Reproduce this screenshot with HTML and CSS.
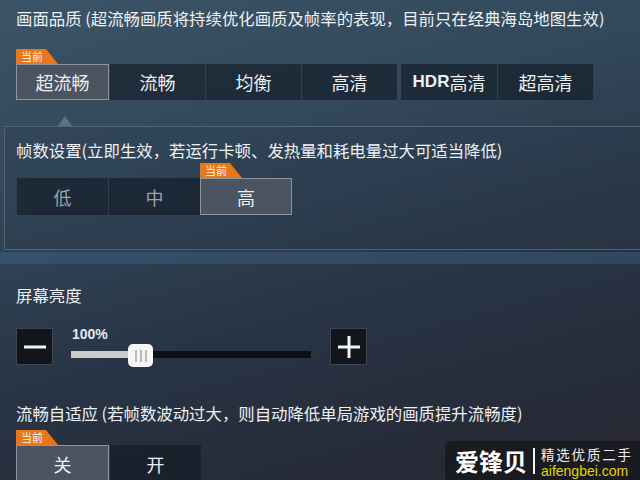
FILE: index.html
```html
<!DOCTYPE html>
<html lang="zh-CN">
<head>
  <meta charset="UTF-8">
  <title>画面设置</title>
  <link rel="stylesheet" href="styles.css">
</head>
<body>
  <div class="page">
    <!-- 画面品质 -->
    <h2 class="title">画面品质 (超流畅画质将持续优化画质及帧率的表现，目前只在经典海岛地图生效)</h2>
    <div class="options quality">
      <div class="opt current first"><span class="badge">当前</span>超流畅</div>
      <div class="opt">流畅</div>
      <div class="opt">均衡</div>
      <div class="opt">高清</div>
      <div class="opt hdr"><b>HDR</b>高清</div>
      <div class="opt">超高清</div>
    </div>

    <!-- 帧数设置 -->
    <div class="panel">
      <span class="pointer"></span>
      <h2 class="title">帧数设置(立即生效，若运行卡顿、发热量和耗电量过大可适当降低)</h2>
      <div class="options fps">
        <div class="opt dim">低</div>
        <div class="opt dim">中</div>
        <div class="opt current"><span class="badge">当前</span>高</div>
      </div>
    </div>
    <div class="band"></div>

    <!-- 屏幕亮度 -->
    <h2 class="title brightness-title">屏幕亮度</h2>
    <div class="slider-row">
      <button class="step">
        <svg width="24" height="24" viewBox="0 0 24 24"><rect x="1" y="10.5" width="22" height="3" fill="#f2f2f2"/></svg>
      </button>
      <div class="slider">
        <div class="value">100%</div>
        <div class="track">
          <div class="fill" style="width: 27%"></div>
          <div class="thumb"><i></i><i></i><i></i></div>
        </div>
      </div>
      <button class="step plus">
        <svg width="24" height="24" viewBox="0 0 24 24"><rect x="1" y="10.5" width="22" height="3" fill="#f2f2f2"/><rect x="10.5" y="1" width="3" height="22" fill="#f2f2f2"/></svg>
      </button>
    </div>

    <!-- 流畅自适应 -->
    <h2 class="title adapt-title">流畅自适应 (若帧数波动过大，则自动降低单局游戏的画质提升流畅度)</h2>
    <div class="options adapt">
      <div class="opt current first"><span class="badge">当前</span>关</div>
      <div class="opt">开</div>
    </div>
  </div>

  <div class="watermark">
    <span class="wm-name">爱锋贝</span>
    <span class="wm-bar"></span>
    <span class="wm-side">
      <span class="wm-slogan">精选优质二手</span>
      <span class="wm-url">aifengbei.com</span>
    </span>
  </div>
</body>
</html>
```

FILE: styles.css
```css
/* General */
html, body {
  margin: 0;
  padding: 0;
  height: 100%;
  overflow: hidden;
}

body {
  font-family: "Noto Sans CJK SC", "Noto Sans", sans-serif;
  color: #e9edf0;
  background: linear-gradient(165deg, #3c5467 0%, #32485b 30%, #283546 60%, #262b38 85%, #2a2832 100%);
  position: relative;
}

.page {
  padding-top: 8px;
}

.title {
  margin: 0;
  padding-left: 16px;
  font-size: 16.4px;
  font-weight: normal;
  line-height: 20px;
  white-space: nowrap;
  color: #eef1f3;
}

/* Option rows */
.options {
  display: flex;
  margin-left: 16px;
}

.opt {
  position: relative;
  width: 96px;
  height: 36px;
  display: flex;
  align-items: center;
  justify-content: center;
  font-size: 18px;
  color: #eceef0;
  background: rgba(18, 26, 36, 0.62);
  border-left: 1px solid rgba(90, 105, 120, 0.35);
  box-sizing: border-box;
}

.opt.first {
  width: 93px;
}

.opt.current {
  background: #4a5561;
  border: 1px solid #8d969f;
}

.opt.dim {
  color: #9aa3ac;
}

.opt.hdr {
  margin-left: 4px;
  border-left: none;
}

.opt.hdr b {
  font-family: "Liberation Sans", Arial, sans-serif;
  font-weight: bold;
  font-size: 17px;
}

.badge {
  position: absolute;
  left: -1px;
  top: -16px;
  width: 42px;
  height: 15px;
  padding-left: 5px;
  box-sizing: border-box;
  background: #e8761c;
  color: #fff3e6;
  font-size: 11px;
  line-height: 15px;
  clip-path: polygon(0 0, 30px 0, 100% 100%, 0 100%);
}

.quality {
  margin-top: 36px;
}

/* 帧数设置 panel */
.panel {
  position: relative;
  margin: 26px 0 0 4px;
  padding: 13px 0 34px 0;
  border-top: 1px solid #55636f;
  border-left: 1px solid #55636f;
  border-bottom: 1px solid #55636f;
  background: rgba(40, 55, 72, 0.25);
}

.panel .title {
  padding-left: 11px;
}

.pointer {
  position: absolute;
  left: 53px;
  top: -11px;
  width: 0;
  height: 0;
  border-left: 7px solid transparent;
  border-right: 7px solid transparent;
  border-bottom: 10px solid #5f7081;
}

.fps {
  margin: 18px 0 0 11px;
}

.fps .opt {
  height: 37px;
  width: 92px;
}

.band {
  height: 12px;
  margin-top: 2px;
  background: rgba(70, 110, 150, 0.35);
}

/* 屏幕亮度 */
.brightness-title {
  margin-top: 21px;
}

.slider-row {
  display: flex;
  align-items: flex-start;
  margin: 23px 0 0 16px;
}

.step {
  width: 37px;
  height: 37px;
  padding: 0;
  display: flex;
  align-items: center;
  justify-content: center;
  background: #121519;
  border: 1px solid #3d4753;
  cursor: pointer;
}

.slider {
  width: 242px;
  margin: 0 18px 0 17px;
}

.value {
  padding-left: 2px;
  font-family: "Liberation Sans", Arial, sans-serif;
  font-size: 14px;
  font-weight: bold;
  line-height: 12px;
  color: #e6e9ec;
}

.track {
  position: relative;
  height: 9px;
  margin-top: 10px;
  background: #0c0f14;
  border: 1px solid #2a3340;
  box-sizing: border-box;
}

.fill {
  height: 100%;
  background: #c9cbcd;
}

.thumb {
  position: absolute;
  left: 57px;
  top: -7px;
  width: 25px;
  height: 23px;
  border-radius: 5px;
  background: #f6f6f6;
  display: flex;
  align-items: center;
  justify-content: center;
  gap: 3px;
}

.thumb i {
  width: 2px;
  height: 12px;
  background: #b9bcbf;
}

/* 流畅自适应 */
.adapt-title {
  margin-top: 38px;
}

.adapt {
  margin-top: 22px;
}

.adapt .opt {
  height: 37px;
}

.adapt .opt:not(.current) {
  width: 92px;
}

/* Watermark */
.watermark {
  position: absolute;
  right: 0;
  bottom: 0;
  width: 195px;
  height: 39px;
  display: flex;
  align-items: center;
  padding-left: 10px;
  box-sizing: border-box;
  background: rgba(24, 25, 30, 0.9);
  border-radius: 6px 0 0 0;
}

.wm-name {
  font-size: 24px;
  font-weight: bold;
  line-height: 30px;
  color: #fff;
}

.wm-bar {
  width: 2px;
  height: 26px;
  margin: 0 6px;
  background: #f2f2f2;
}

.wm-side {
  display: flex;
  flex-direction: column;
}

.wm-slogan {
  font-size: 13.5px;
  line-height: 20px;
  color: #f0f0f0;
  letter-spacing: 1.8px;
}

.wm-url {
  font-family: "Liberation Sans", Arial, sans-serif;
  font-size: 14px;
  line-height: 14px;
  color: #e2d400;
}
```
